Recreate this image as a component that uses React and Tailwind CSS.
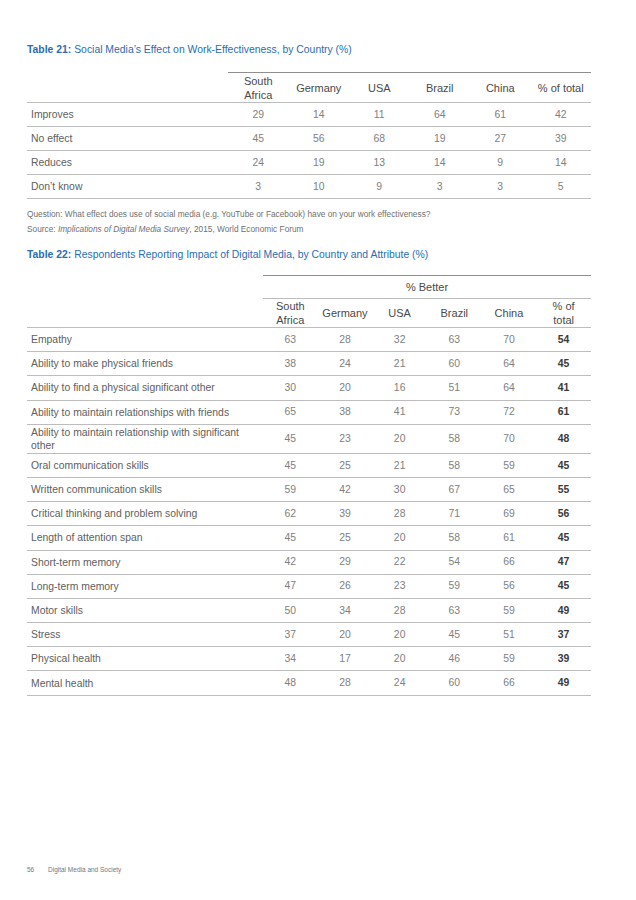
const t21 = [
  ["Improves", 29, 14, 11, 64, 61, 42],
  ["No effect", 45, 56, 68, 19, 27, 39],
  ["Reduces", 24, 19, 13, 14, 9, 14],
  ["Don\u2019t know", 3, 10, 9, 3, 3, 5],
];

const t22 = [
  ["Empathy", 63, 28, 32, 63, 70, 54],
  ["Ability to make physical friends", 38, 24, 21, 60, 64, 45],
  ["Ability to find a physical significant other", 30, 20, 16, 51, 64, 41],
  ["Ability to maintain relationships with friends", 65, 38, 41, 73, 72, 61],
  ["Ability to maintain relationship with significant other", 45, 23, 20, 58, 70, 48],
  ["Oral communication skills", 45, 25, 21, 58, 59, 45],
  ["Written communication skills", 59, 42, 30, 67, 65, 55],
  ["Critical thinking and problem solving", 62, 39, 28, 71, 69, 56],
  ["Length of attention span", 45, 25, 20, 58, 61, 45],
  ["Short-term memory", 42, 29, 22, 54, 66, 47],
  ["Long-term memory", 47, 26, 23, 59, 56, 45],
  ["Motor skills", 50, 34, 28, 63, 59, 49],
  ["Stress", 37, 20, 20, 45, 51, 37],
  ["Physical health", 34, 17, 20, 46, 59, 39],
  ["Mental health", 48, 28, 24, 60, 66, 49],
];

const font = { fontFamily: '"Liberation Sans", Arial, sans-serif' };

export default function App() {
  return (
    <div className="w-[636px] h-[900px] bg-white relative" style={font}>
      <div className="pt-[43px] pl-[27px] w-[591px]">
        {/* Table 21 */}
        <div className="text-[10.4px] leading-[14px] text-[#2a6db3]">
          <span className="font-bold">Table 21:</span> Social Media’s Effect on Work-Effectiveness, by Country (%)
        </div>
        <div className="mt-[15px] w-[564px]">
          <div className="flex h-[31px] border-b-[1.5px] border-[#bdbdbd]">
            <div className="w-[201px]" />
            <div className="flex-1 flex items-center border-t-[1.5px] border-[#8f8f8f] text-[11px] leading-[14px] text-[#4a4a4a]">
              <div className="w-1/6 text-center">South<br />Africa</div>
              <div className="w-1/6 text-center">Germany</div>
              <div className="w-1/6 text-center">USA</div>
              <div className="w-1/6 text-center">Brazil</div>
              <div className="w-1/6 text-center">China</div>
              <div className="w-1/6 text-center">% of total</div>
            </div>
          </div>
          {t21.map((r) => (
            <div key={r[0]} className="flex h-[24px] items-center border-b-[1.5px] border-[#bdbdbd] text-[10.4px]">
              <div className="w-[201px] pl-[4px] text-[#606060]">{r[0]}</div>
              <div className="flex-1 flex text-[#808080]">
                {r.slice(1).map((v, i) => (
                  <div key={i} className="w-1/6 text-center">{v}</div>
                ))}
              </div>
            </div>
          ))}
        </div>
        <div className="mt-[8px] text-[8.3px] leading-[15px] text-[#707070]">
          <div>Question: What effect does use of social media (e.g. YouTube or Facebook) have on your work effectiveness?</div>
          <div>Source: <span className="italic">Implications of Digital Media Survey</span>, 2015, World Economic Forum</div>
        </div>

        {/* Table 22 */}
        <div className="mt-[11px] text-[10.4px] leading-[14px] text-[#2a6db3]">
          <span className="font-bold">Table 22:</span> Respondents Reporting Impact of Digital Media, by Country and Attribute (%)
        </div>
        <div className="mt-[13px] w-[564px]">
          <div className="flex h-[24px]">
            <div className="w-[236px]" />
            <div className="flex-1 flex items-center justify-center border-t-[1.5px] border-b-[1.5px] border-t-[#8f8f8f] border-b-[#bdbdbd] text-[11px] text-[#4a4a4a]">
              % Better
            </div>
          </div>
          <div className="flex h-[29px] border-b-[1.5px] border-[#bdbdbd]">
            <div className="w-[236px]" />
            <div className="flex-1 flex items-center text-[11px] leading-[14px] text-[#4a4a4a]">
              <div className="w-1/6 text-center">South<br />Africa</div>
              <div className="w-1/6 text-center">Germany</div>
              <div className="w-1/6 text-center">USA</div>
              <div className="w-1/6 text-center">Brazil</div>
              <div className="w-1/6 text-center">China</div>
              <div className="w-1/6 text-center">% of<br />total</div>
            </div>
          </div>
          {t22.map((r) => {
            const tall = r[0].length > 50;
            return (
              <div
                key={r[0]}
                className={
                  "flex items-center border-b-[1.5px] border-[#bdbdbd] text-[10.4px] " +
                  (tall ? "h-[29px]" : "h-[24.2px]")
                }
              >
                <div className="w-[236px] pl-[4px] pr-[20px] leading-[13px] text-[#606060]">{r[0]}</div>
                <div className="flex-1 flex text-[#808080]">
                  {r.slice(1).map((v, i) => (
                    <div key={i} className={"w-1/6 text-center " + (i === 5 ? "text-[#3a3a3a] font-bold" : "")}>
                      {v}
                    </div>
                  ))}
                </div>
              </div>
            );
          })}
        </div>
      </div>
      <div className="absolute left-[27px] top-[865px] flex text-[6.5px] leading-[10px] text-[#777]">
        <span className="w-[21px]">56</span>
        <span>Digital Media and Society</span>
      </div>
    </div>
  );
}
